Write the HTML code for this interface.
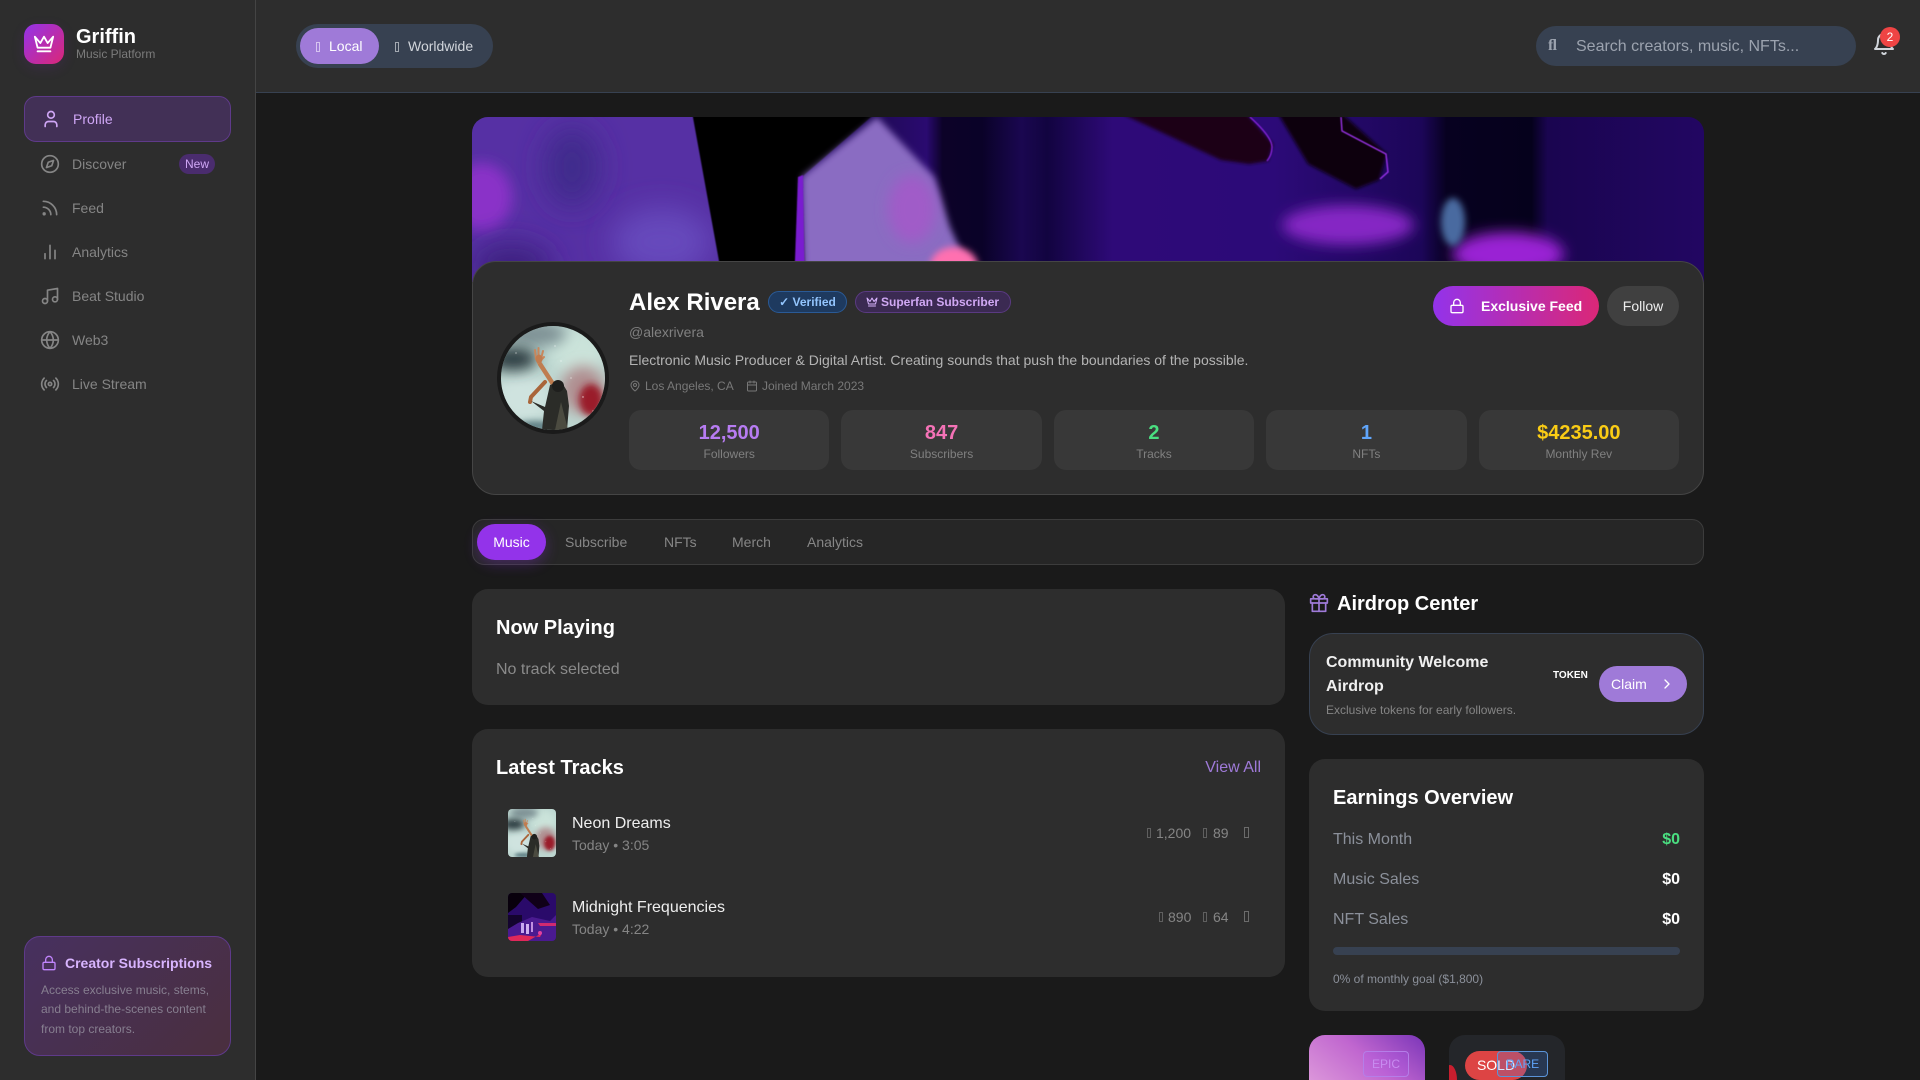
<!DOCTYPE html>
<html lang="en"><head><meta charset="utf-8"><title>Griffin</title>
<style>
*{box-sizing:border-box;margin:0;padding:0}
html,body{width:1920px;height:1080px;overflow:hidden;background:#1a1a1a;font-family:"Liberation Sans",sans-serif;color:#fff}
#w{position:relative;width:1920px;height:1080px;overflow:hidden;background:#1a1a1a}
.a{position:absolute}
.t{position:absolute;white-space:nowrap;line-height:20px;font-size:14px}
.tf{position:absolute;border:1px solid currentColor;width:5px;height:10px;opacity:.75}
svg.i{position:absolute;fill:none;stroke:currentColor;stroke-width:2;stroke-linecap:round;stroke-linejoin:round}
.nav{color:#858585}
.stat{position:absolute;top:410px;height:60px;width:200.4px;background:#383838;border-radius:12px;text-align:center}
.stat b{position:absolute;left:0;right:0;top:11px;font-size:20px;line-height:24px}
.stat span{position:absolute;left:0;right:0;top:34px;font-size:12px;line-height:20px;color:#808080}
.card{position:absolute;background:#2d2d2d;border-radius:16px}
</style></head><body>
<div id="w">
<svg width="0" height="0" style="position:absolute"><defs>
<filter id="b0" x="-100%" y="-100%" width="300%" height="300%"><feGaussianBlur stdDeviation=".6"/></filter>
<filter id="b1" x="-100%" y="-100%" width="300%" height="300%"><feGaussianBlur stdDeviation="1.5"/></filter>
<filter id="b3" x="-100%" y="-100%" width="300%" height="300%"><feGaussianBlur stdDeviation="3.5"/></filter>
<filter id="b5" x="-100%" y="-100%" width="300%" height="300%"><feGaussianBlur stdDeviation="7"/></filter>
<filter id="b9" x="-100%" y="-100%" width="300%" height="300%"><feGaussianBlur stdDeviation="14"/></filter>
<linearGradient id="cg" x1="0" x2="1" y1="0" y2="0">
<stop offset="0" stop-color="#5630a4"/><stop offset=".199" stop-color="#5630a4"/><stop offset=".325" stop-color="#1f0a55"/><stop offset=".369" stop-color="#2a0a70"/><stop offset=".382" stop-color="#0c0228"/><stop offset=".414" stop-color="#0a0228"/><stop offset=".446" stop-color="#1a0750"/><stop offset=".467" stop-color="#120440"/><stop offset=".52" stop-color="#2e0a78"/><stop offset=".65" stop-color="#2c0a78"/><stop offset=".771" stop-color="#1c0658"/><stop offset=".791" stop-color="#070120"/><stop offset=".86" stop-color="#05011c"/><stop offset=".873" stop-color="#1a0550"/><stop offset="1" stop-color="#220662"/>
</linearGradient>
<symbol id="av" viewBox="0 0 104 104" preserveAspectRatio="none">
<rect width="104" height="104" fill="#bcd6d0"/>
<ellipse cx="77" cy="27" rx="26" ry="24" fill="#cbe3da" filter="url(#b5)"/>
<ellipse cx="22" cy="72" rx="28" ry="24" fill="#cfe3df" filter="url(#b5)"/>
<ellipse cx="35" cy="8" rx="30" ry="12" fill="#7e9194" filter="url(#b5)"/>
<ellipse cx="12" cy="33" rx="24" ry="12" fill="#2e3c42" filter="url(#b5)"/>
<ellipse cx="34" cy="100" rx="20" ry="5" fill="#5a7a80" filter="url(#b3)"/>
<ellipse cx="82" cy="64" rx="22" ry="24" fill="#b08e90" filter="url(#b5)"/>
<ellipse cx="90" cy="74" rx="12" ry="16" fill="#9a1f2a" filter="url(#b3)"/>
<path d="M44 56L30 71 29 76" stroke="#a9653a" stroke-width="4" fill="none" stroke-linecap="round" stroke-linejoin="round"/>
<path d="M52 58L39 38" stroke="#bf7d50" stroke-width="4.5" fill="none" stroke-linecap="round"/>
<path d="M35 33L34 24M37.500 32V22M40 33L42 25M37 37L43 31" stroke="#c8875c" stroke-width="2" fill="none" stroke-linecap="round"/>
<ellipse cx="38" cy="33" rx="3.500" ry="4.500" fill="#c07c50"/>
<path d="M30 75L44 81 49 59 60 55 66 65 68 80 66 104 41 104 43 85z" fill="#2b2c28"/>
<path d="M54 104L60 76 67 104z" fill="#4b4b40"/>
<ellipse cx="57" cy="60" rx="6" ry="6" fill="#1f1f1d"/>
<g fill="#fff" opacity=".8"><circle cx="15" cy="27" r=".6"/><circle cx="54" cy="20" r=".6"/><circle cx="60" cy="35" r=".6"/><circle cx="82" cy="71" r=".7"/><circle cx="92" cy="85" r=".6"/><circle cx="70" cy="52" r=".6"/></g>
</symbol>
</defs></svg>

<!-- sidebar -->
<div class="a" style="left:0;top:0;width:256px;height:1080px;background:#2d2d2d;border-right:1px solid #444"></div>
<div class="a" style="left:24px;top:24px;width:40px;height:40px;border-radius:12px;background:linear-gradient(135deg,#9333ea,#db2777);box-shadow:0 4px 14px rgba(147,51,234,.12)"></div>
<svg class="i" style="left:33px;top:33px;color:#fff" width="22" height="22" viewBox="0 0 24 24"><path d="M2 4l3 12h14l3-12-6 7-4-7-4 7-6-7zM5 20h14"/></svg>
<div class="t" style="left:76px;top:25px;font-size:20px;line-height:24px;font-weight:700">Griffin</div>
<div class="t" style="left:76px;top:44px;font-size:12px;color:#7b7b7b">Music Platform</div>

<div class="a" style="left:24px;top:96px;width:207px;height:46px;border-radius:12px;background:#423056;border:1px solid #5f3a8a"></div>
<svg class="i" style="left:41px;top:109px;color:#cfa6f5" width="20" height="20" viewBox="0 0 24 24"><path d="M19 21v-2a4 4 0 0 0-4-4H9a4 4 0 0 0-4 4v2"/><circle cx="12" cy="7" r="4"/></svg>
<div class="t" style="left:73px;top:109px;color:#cfa6f5">Profile</div>

<div class="nav">
<svg class="i" style="left:40px;top:154px" width="20" height="20" viewBox="0 0 24 24"><circle cx="12" cy="12" r="10"/><polygon points="16.24 7.76 14.12 14.12 7.76 16.24 9.88 9.88"/></svg>
<div class="t" style="left:72px;top:154px">Discover</div>
<svg class="i" style="left:40px;top:198px" width="20" height="20" viewBox="0 0 24 24"><path d="M4 11a9 9 0 0 1 9 9M4 4a16 16 0 0 1 16 16"/><circle cx="5" cy="19" r="1"/></svg>
<div class="t" style="left:72px;top:198px">Feed</div>
<svg class="i" style="left:40px;top:242px" width="20" height="20" viewBox="0 0 24 24"><path d="M18 20V10M12 20V4M6 20v-6"/></svg>
<div class="t" style="left:72px;top:242px">Analytics</div>
<svg class="i" style="left:40px;top:286px" width="20" height="20" viewBox="0 0 24 24"><path d="M9 18V5l12-2v13"/><circle cx="6" cy="18" r="3"/><circle cx="18" cy="16" r="3"/></svg>
<div class="t" style="left:72px;top:286px">Beat Studio</div>
<svg class="i" style="left:40px;top:330px" width="20" height="20" viewBox="0 0 24 24"><circle cx="12" cy="12" r="10"/><path d="M2 12h20M12 2a15.3 15.3 0 0 1 4 10 15.3 15.3 0 0 1-4 10 15.3 15.3 0 0 1-4-10 15.3 15.3 0 0 1 4-10z"/></svg>
<div class="t" style="left:72px;top:330px">Web3</div>
<svg class="i" style="left:40px;top:374px" width="20" height="20" viewBox="0 0 24 24"><circle cx="12" cy="12" r="2"/><path d="M16.24 7.76a6 6 0 0 1 0 8.49M7.76 16.24a6 6 0 0 1 0-8.49M19.07 4.93a10 10 0 0 1 0 14.14M4.93 19.07a10 10 0 0 1 0-14.14"/></svg>
<div class="t" style="left:72px;top:374px">Live Stream</div>
</div>
<div class="a" style="left:179px;top:154px;width:36px;height:20px;border-radius:10px;background:#4a2c6e;color:#cfa6f5;font-size:12px;line-height:20px;text-align:center">New</div>

<div class="a" style="left:24px;top:936px;width:207px;height:120px;border-radius:16px;background:linear-gradient(135deg,#47305f,#4a2f3e);border:1px solid #5f3a8a"></div>
<svg class="i" style="left:41px;top:955px;color:#c084fc" width="16" height="16" viewBox="0 0 24 24"><rect x="3" y="11" width="18" height="11" rx="2"/><path d="M7 11V7a5 5 0 0 1 10 0v4"/></svg>
<div class="t" style="left:65px;top:953px;font-weight:700;color:#d8b4fe">Creator Subscriptions</div>
<div class="a" style="left:41px;top:980.500px;width:176px;font-size:12px;line-height:19.5px;color:#877f90">Access exclusive music, stems, and behind-the-scenes content from top creators.</div>

<!-- header -->
<div class="a" style="left:256px;top:0;width:1664px;height:93px;background:#2d2d2d;border-bottom:1px solid #374151"></div>
<div class="a" style="left:296px;top:24px;width:197px;height:44px;border-radius:22px;background:#374151"></div>
<div class="a" style="left:300px;top:28px;width:79px;height:36px;border-radius:18px;background:#9f7ad8"></div>
<div class="tf" style="left:316px;top:42px;width:4px;color:#e8dcf8"></div>
<div class="t" style="left:329px;top:36px;color:#fff">Local</div>
<div class="tf" style="left:395px;top:42px;width:4px;color:#c8ccd2"></div>
<div class="t" style="left:408px;top:36px;color:#d1d5db">Worldwide</div>
<div class="a" style="left:1536px;top:26px;width:320px;height:40px;border-radius:20px;background:#374151"></div>
<div class="t" style="left:1548px;top:36px;color:#9ca3af;font-size:16px;font-family:'Liberation Serif',serif;font-weight:700">&#xFB02;</div>
<div class="t" style="left:1576px;top:35.500px;font-size:16px;color:#9ca3af;margin-top:1px">Search creators, music, NFTs...</div>
<svg class="i" style="left:1872px;top:32px;color:#d1d5db" width="24" height="24" viewBox="0 0 24 24"><path d="M18 8A6 6 0 0 0 6 8c0 7-3 9-3 9h18s-3-2-3-9"/><path d="M13.73 21a2 2 0 0 1-3.46 0"/></svg>
<div class="a" style="left:1880px;top:27px;width:20px;height:20px;border-radius:50%;background:#ef4444;font-size:12px;line-height:20px;text-align:center">2</div>

<!-- cover -->
<svg class="a" style="left:472px;top:117px;border-radius:16px 16px 0 0" width="1232" height="165" viewBox="0 0 1232 165">
<rect width="1232" height="165" fill="url(#cg)"/>
<ellipse cx="10" cy="80" rx="30" ry="34" fill="#8a30c8" filter="url(#b5)"/>
<ellipse cx="100" cy="50" rx="28" ry="40" fill="#402c8c" filter="url(#b9)"/>
<ellipse cx="190" cy="125" rx="50" ry="34" fill="#6648bc" filter="url(#b9)"/>
<ellipse cx="40" cy="150" rx="40" ry="24" fill="#3c2480" filter="url(#b9)"/>
<path d="M220 -5L247 144 247 170 335 170 330 60 405 -5z" fill="#000" filter="url(#b0)"/>
<path d="M405 0L330 60 332 170 505 170 478 110 462 60z" fill="#8a6cc2" filter="url(#b3)"/>
<ellipse cx="440" cy="92" rx="24" ry="34" fill="#a05cc8" filter="url(#b5)"/>
<ellipse cx="482" cy="150" rx="24" ry="20" fill="#ff70b0" filter="url(#b3)"/>
<path d="M326 60L331 58 333 170 322 170z" fill="#7a1fd0" filter="url(#b0)"/>
<path d="M646 -5L773 -5 801 27 796 44 777 47 749 43z" fill="#1a0214" filter="url(#b1)"/>
<path d="M805 -5L868 -5 915 37 907 63 884 72 836 47z" fill="#0e0010" filter="url(#b1)"/>
<path d="M778 0Q800 20 800 30 800 38 795 44" stroke="#8a25e0" stroke-width="1.3" fill="none" filter="url(#b0)"/>
<path d="M869 0L870 14 914 37 916 55 908 62" stroke="#a335f5" stroke-width="1.3" fill="none" filter="url(#b0)"/>
<ellipse cx="876" cy="108" rx="66" ry="20" fill="#8526c4" filter="url(#b5)"/>
<ellipse cx="1036" cy="137" rx="56" ry="22" fill="#9a22d4" filter="url(#b5)"/>
<ellipse cx="981" cy="105" rx="12" ry="24" fill="#4a6aa0" filter="url(#b3)"/>
</svg>

<!-- profile card -->
<div class="a" style="left:472px;top:261px;width:1232px;height:234px;background:#2d2d2d;border:1px solid #454545;border-radius:24px"></div>
<div class="a" style="left:497px;top:322px;width:112px;height:112px;border-radius:50%;background:#1a1a1a"></div>
<svg class="a" style="left:501px;top:326px;border-radius:50%" width="104" height="104"><use href="#av" width="104" height="104"/></svg>
<div class="t" style="left:629px;top:289px;font-size:24px;line-height:28px;font-weight:700">Alex Rivera</div>
<div class="a" style="left:768px;top:291px;width:79px;height:22px;border-radius:11px;background:#1e3a5f;border:1px solid #2a5a96;color:#93c5fd;font-size:12px;font-weight:700;line-height:20px;text-align:center">✓ Verified</div>
<div class="a" style="left:855px;top:291px;width:156px;height:22px;border-radius:11px;background:#3b2a52;border:1px solid #5a3a82"></div>
<svg class="i" style="left:866px;top:296px;color:#d8b4fe" width="12" height="12" viewBox="0 0 24 24"><path d="M2 4l3 12h14l3-12-6 7-4-7-4 7-6-7zM5 20h14"/></svg>
<div class="t" style="left:881px;top:292px;font-size:12px;font-weight:700;color:#d0a8f4">Superfan Subscriber</div>
<div class="t" style="left:629px;top:322px;color:#808080">@alexrivera</div>
<div class="t" style="left:629px;top:350px;color:#b4b4b4">Electronic Music Producer &amp; Digital Artist. Creating sounds that push the boundaries of the possible.</div>
<svg class="i" style="left:629px;top:380px;color:#777" width="12" height="12" viewBox="0 0 24 24"><path d="M20 10c0 6-8 12-8 12s-8-6-8-12a8 8 0 0 1 16 0Z"/><circle cx="12" cy="10" r="3"/></svg>
<div class="t" style="left:645px;top:376px;font-size:12px;color:#787878">Los Angeles, CA</div>
<svg class="i" style="left:746px;top:380px;color:#777" width="12" height="12" viewBox="0 0 24 24"><rect x="3" y="4" width="18" height="18" rx="2"/><path d="M16 2v4M8 2v4M3 10h18"/></svg>
<div class="t" style="left:762px;top:376px;font-size:12px;color:#787878">Joined March 2023</div>

<div class="stat" style="left:629px"><b style="color:#b77cf2">12,500</b><span>Followers</span></div>
<div class="stat" style="left:841.4px"><b style="color:#f472b6">847</b><span>Subscribers</span></div>
<div class="stat" style="left:1053.8px"><b style="color:#4ade80">2</b><span>Tracks</span></div>
<div class="stat" style="left:1266.2px"><b style="color:#60a5fa">1</b><span>NFTs</span></div>
<div class="stat" style="left:1478.6px"><b style="color:#facc15">$4235.00</b><span>Monthly Rev</span></div>

<div class="a" style="left:1433px;top:286px;width:166px;height:40px;border-radius:20px;background:linear-gradient(90deg,#9333ea,#db2777)"></div>
<svg class="i" style="left:1449px;top:298px;color:#fff" width="16" height="16" viewBox="0 0 24 24"><rect x="3" y="11" width="18" height="11" rx="2"/><path d="M7 11V7a5 5 0 0 1 10 0v4"/></svg>
<div class="t" style="left:1481px;top:296px;font-weight:700">Exclusive Feed</div>
<div class="a" style="left:1607px;top:286px;width:72px;height:40px;border-radius:20px;background:#404040;font-size:14px;line-height:40px;text-align:center;color:#eee">Follow</div>

<!-- tabs -->
<div class="a" style="left:472px;top:519px;width:1232px;height:46px;background:#262626;border:1px solid #3c3c3c;border-radius:12px"></div>
<div class="a" style="left:477px;top:524px;width:69px;height:36px;border-radius:18px;background:#9333ea;box-shadow:0 4px 14px rgba(147,51,234,.3);font-size:14px;line-height:36px;text-align:center">Music</div>
<div class="t" style="left:565px;top:532px;color:#868686">Subscribe</div>
<div class="t" style="left:664px;top:532px;color:#868686">NFTs</div>
<div class="t" style="left:732px;top:532px;color:#868686">Merch</div>
<div class="t" style="left:807px;top:532px;color:#868686">Analytics</div>

<!-- now playing -->
<div class="card" style="left:472px;top:589px;width:813px;height:116px"></div>
<div class="t" style="left:496px;top:616px;font-size:20px;line-height:24px;font-weight:700">Now Playing</div>
<div class="t" style="left:496px;top:660px;font-size:16px;color:#8a8a8a">No track selected</div>

<!-- tracks -->
<div class="card" style="left:472px;top:729px;width:813px;height:248px"></div>
<div class="t" style="left:496px;top:756px;font-size:20px;line-height:24px;font-weight:700">Latest Tracks</div>
<div class="t" style="right:659px;top:756.500px;font-size:16px;color:#9f7ad8;margin-top:1px">View All</div>
<svg class="a" style="left:508px;top:809px;border-radius:4px" width="48" height="48"><use href="#av" width="48" height="48"/></svg>
<div class="t" style="left:572px;top:814px;font-size:16px;color:#eee">Neon Dreams</div>
<div class="t" style="left:572px;top:835px;color:#858585">Today • 3:05</div>
<div class="tf" style="left:1147px;top:828px;width:4px;color:#707070"></div>
<div class="t" style="left:1156px;top:823px;color:#858585">1,200</div>
<div class="tf" style="left:1203px;top:828px;width:4px;color:#707070"></div>
<div class="t" style="left:1213px;top:823px;color:#858585">89</div>
<div class="tf" style="left:1244px;top:827px;height:11px;color:#808080"></div>

<svg class="a" style="left:508px;top:893px;border-radius:4px" width="48" height="48" viewBox="0 0 48 48">
<rect width="48" height="48" fill="#2a0a6a"/><path d="M0 0H20L8 14 0 20z" fill="#08000c"/><path d="M12 0H34L42 12 30 16z" fill="#100018"/>
<rect x="0" y="22" width="14" height="26" fill="#14042e"/><path d="M10 30L24 24 42 28 48 22V48H0V36z" fill="#4a1a90"/>
<rect x="13" y="30" width="3" height="10" fill="#c8a8f0"/><rect x="18" y="31" width="3" height="10" fill="#d0b0f0"/><rect x="23" y="29" width="2" height="10" fill="#c090e0"/>
<path d="M30 30H48V33H32z" fill="#d02a70"/><path d="M0 44L12 42 32 44 34 40 20 48H0z" fill="#e0285a"/><circle cx="32" cy="40" r="2" fill="#e040a0"/></svg>
<div class="t" style="left:572px;top:898px;font-size:16px;color:#eee">Midnight Frequencies</div>
<div class="t" style="left:572px;top:919px;color:#858585">Today • 4:22</div>
<div class="tf" style="left:1159px;top:912px;width:4px;color:#707070"></div>
<div class="t" style="left:1168px;top:907px;color:#858585">890</div>
<div class="tf" style="left:1203px;top:912px;width:4px;color:#707070"></div>
<div class="t" style="left:1213px;top:907px;color:#858585">64</div>
<div class="tf" style="left:1244px;top:911px;height:11px;color:#808080"></div>

<!-- airdrop -->
<svg class="i" style="left:1309px;top:593px;color:#9f7ad8" width="20" height="20" viewBox="0 0 24 24"><path d="M20 12v10H4V12"/><rect x="2" y="7" width="20" height="5"/><path d="M12 22V7M12 7H7.5a2.5 2.5 0 0 1 0-5C11 2 12 7 12 7zM12 7h4.5a2.5 2.5 0 0 0 0-5C13 2 12 7 12 7z"/></svg>
<div class="t" style="left:1337px;top:592px;font-size:20px;line-height:24px;font-weight:700">Airdrop Center</div>
<div class="a" style="left:1309px;top:633px;width:395px;height:102px;background:#2d2d2d;border:1px solid #374151;border-radius:24px"></div>
<div class="a" style="left:1326px;top:651px;width:200px;font-size:16px;line-height:24px;font-weight:700;color:#f0f0f0">Community Welcome Airdrop</div>
<div class="t" style="left:1326px;top:700px;font-size:12px;color:#858585">Exclusive tokens for early followers.</div>
<div class="t" style="left:1553px;top:664px;font-size:10px;font-weight:700;color:#fff;margin-top:2px">TOKEN</div>
<div class="a" style="left:1599px;top:666px;width:88px;height:36px;border-radius:18px;background:#9f7ad8"></div>
<div class="t" style="left:1611px;top:674px;color:#fff">Claim</div>
<svg class="i" style="left:1659px;top:676px;color:#fff" width="16" height="16" viewBox="0 0 24 24"><path d="M9 18l6-6-6-6"/></svg>

<!-- earnings -->
<div class="card" style="left:1309px;top:759px;width:395px;height:252px"></div>
<div class="t" style="left:1333px;top:786px;font-size:20px;line-height:24px;font-weight:700">Earnings Overview</div>
<div class="t" style="left:1333px;top:830px;font-size:16px;color:#8b909a">This Month</div>
<div class="t" style="right:240px;top:830px;font-size:16px;font-weight:700;color:#4ade80">$0</div>
<div class="t" style="left:1333px;top:870px;font-size:16px;color:#8b909a">Music Sales</div>
<div class="t" style="right:240px;top:870px;font-size:16px;font-weight:700">$0</div>
<div class="t" style="left:1333px;top:910px;font-size:16px;color:#8b909a">NFT Sales</div>
<div class="t" style="right:240px;top:910px;font-size:16px;font-weight:700">$0</div>
<div class="a" style="left:1333px;top:947px;width:347px;height:8px;border-radius:4px;background:#374151"></div>
<div class="t" style="left:1333px;top:969px;font-size:12px;color:#8b909a">0% of monthly goal ($1,800)</div>

<!-- nft -->
<div class="a" style="left:1309px;top:1035px;width:116px;height:45px;border-radius:16px 16px 0 0;background:linear-gradient(40deg,#db96da 0%,#c066cf 50%,#7a35b8 100%)"></div>
<div class="a" style="left:1363px;top:1051px;width:46px;height:26px;border-radius:4px;background:rgba(168,85,247,.2);border:1px solid #b57ee8;color:#c88cf0;font-size:12px;line-height:24px;text-align:center">EPIC</div>
<div class="a" style="left:1449px;top:1035px;width:116px;height:45px;border-radius:16px 16px 0 0;background:#24262a;overflow:hidden"><div class="a" style="left:-6px;top:30px;width:14px;height:30px;background:#c81e2e;border-radius:50%"></div></div>
<div class="a" style="left:1465px;top:1051px;width:62px;height:29px;border-radius:15px;background:#dd4444;color:#fff;font-size:14px;line-height:29px;text-align:center">SOLD</div>
<div class="a" style="left:1497px;top:1051px;width:51px;height:26px;border-radius:4px;background:rgba(59,130,246,.2);border:1px solid #5b94d8;color:#60a5fa;font-size:12px;line-height:24px;text-align:center">RARE</div>
</div>
</body></html>
